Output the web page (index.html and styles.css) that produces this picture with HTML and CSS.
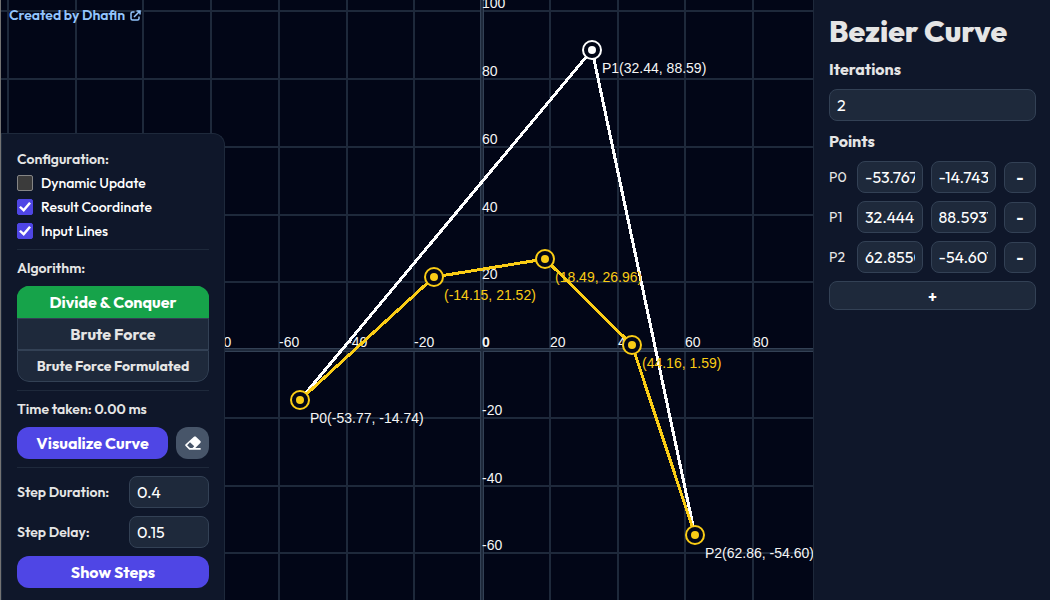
FILE: index.html
```html
<!DOCTYPE html>
<html lang="en">
<head>
<meta charset="utf-8">
<meta name="viewport" content="width=device-width, initial-scale=1">
<title>Bezier Curve</title>
<link rel="stylesheet" href="styles.css">
</head>
<body>
<div class="app">
  <main class="stage">
    <svg class="plot" role="img" aria-label="Bezier curve plot">
      <path class="grid" d="M8 0V2000M76 0V2000M143 0V2000M211 0V2000M279 0V2000M347 0V2000M414 0V2000M550 0V2000M618 0V2000M685 0V2000M753 0V2000M821 0V2000M889 0V2000M0 11H3000M0 79H3000M0 147H3000M0 215H3000M0 282H3000M0 418H3000M0 486H3000M0 553H3000M0 621H3000"/>
      <path class="axis" d="M482 0V2000M0 350H3000"/>
      <path class="axis-core" d="M482 0V2000M0 350H3000"/>
      <g class="ticks">
        <text x="211" y="347">-80</text><text x="279" y="347">-60</text><text x="347" y="347">-40</text><text x="414" y="347">-20</text>
        <text class="origin" x="482" y="347">0</text>
        <text x="550" y="347">20</text><text x="618" y="347">40</text><text x="685" y="347">60</text><text x="753" y="347">80</text>
        <text x="482" y="8">100</text><text x="482" y="76">80</text><text x="482" y="144">60</text><text x="482" y="212">40</text><text x="482" y="279">20</text>
        <text x="482" y="415">-20</text><text x="482" y="483">-40</text><text x="482" y="550">-60</text>
      </g>
      <polyline class="input-line" points="300,400 592,50 695,535"/>
      <polyline class="result-line" points="300,400 434,277 545,259 632,345 695,535"/>
      <g class="input-node"><circle cx="592" cy="50" r="9"/><circle class="dot" cx="592" cy="50" r="4"/></g>
      <g class="result-node">
        <circle cx="300" cy="400" r="9"/><circle class="dot" cx="300" cy="400" r="4"/>
        <circle cx="434" cy="277" r="9"/><circle class="dot" cx="434" cy="277" r="4"/>
        <circle cx="545" cy="259" r="9"/><circle class="dot" cx="545" cy="259" r="4"/>
        <circle cx="632" cy="345" r="9"/><circle class="dot" cx="632" cy="345" r="4"/>
        <circle cx="695" cy="535" r="9"/><circle class="dot" cx="695" cy="535" r="4"/>
      </g>
      <g class="ticks">
        <text x="310" y="423">P0(-53.77, -14.74)</text>
        <text x="602" y="73">P1(32.44, 88.59)</text>
        <text x="705" y="558">P2(62.86, -54.60)</text>
      </g>
      <g class="result-labels">
        <text x="444" y="300">(-14.15, 21.52)</text>
        <text x="555" y="282">(18.49, 26.96)</text>
        <text x="642" y="368">(44.16, 1.59)</text>
      </g>
    </svg>
    <a class="credit" href="#">Created by Dhafin
      <svg class="credit-icon" viewBox="0 0 22 22" aria-hidden="true"><path d="M9 4H5Q2 4 2 7V17Q2 20 5 20H15Q18 20 18 17V13M13 2H20V9M20 2L8 14"/></svg>
    </a>
    <section class="panel">
      <div class="group">
        <h2 class="caption">Configuration:</h2>
        <label class="check"><input type="checkbox"><span>Dynamic Update</span></label>
        <label class="check"><input type="checkbox" checked><span>Result Coordinate</span></label>
        <label class="check"><input type="checkbox" checked><span>Input Lines</span></label>
      </div>
      <div class="group algorithm-group">
        <h2 class="caption">Algorithm:</h2>
        <div class="algorithms">
          <button class="algorithm selected" type="button">Divide &amp; Conquer</button>
          <button class="algorithm" type="button">Brute Force</button>
          <button class="algorithm small" type="button">Brute Force Formulated</button>
        </div>
      </div>
      <div class="group">
        <p class="caption">Time taken: 0.00 ms</p>
        <div class="actions">
          <button class="primary" type="button">Visualize Curve</button>
          <button class="erase" type="button" aria-label="Clear"><svg viewBox="0 0 45 38" aria-hidden="true"><path fill-rule="evenodd" d="M26 1Q28 0 30 1L44 14Q45 17 43 19L29 33H44V38H12L1 27Q0 25 1 23ZM14 17L6 25L14 33H21L26 28Z"/></svg></button>
        </div>
      </div>
      <div class="group steps">
        <div class="field"><label for="duration">Step Duration:</label><input class="box" id="duration" type="text" value="0.4"></div>
        <div class="field"><label for="delay">Step Delay:</label><input class="box" id="delay" type="text" value="0.15"></div>
        <button class="primary" type="button">Show Steps</button>
      </div>
    </section>
  </main>
  <aside class="sidebar">
    <h1 class="title">Bezier Curve</h1>
    <label class="heading" for="iterations">Iterations</label>
    <input class="box" id="iterations" type="text" value="2">
    <h2 class="heading">Points</h2>
    <div class="points">
      <div class="point"><span class="name">P0</span><input class="box" aria-label="P0 x" value="-53.767"><input class="box" aria-label="P0 y" value="-14.743"><button class="tool" type="button" aria-label="Remove P0">-</button></div>
      <div class="point"><span class="name">P1</span><input class="box" aria-label="P1 x" value="32.444"><input class="box" aria-label="P1 y" value="88.5937"><button class="tool" type="button" aria-label="Remove P1">-</button></div>
      <div class="point"><span class="name">P2</span><input class="box" aria-label="P2 x" value="62.8550"><input class="box" aria-label="P2 y" value="-54.607"><button class="tool" type="button" aria-label="Remove P2">-</button></div>
      <button class="tool add" type="button" aria-label="Add point">+</button>
    </div>
  </aside>
</div>
</body>
</html>
```
FILE: styles.css
```css
* { box-sizing: border-box; }
body {
  margin: 0;
  background: #020617;
  color: #e5e5e5;
  font: 600 14px/24px Outfit, Lato, sans-serif;
}
h1, h2, p { margin: 0; font: inherit; }
button, input { font: inherit; color: inherit; margin: 0; }
button { cursor: pointer; }
.app { display: flex; min-height: 100vh; }
.stage {
  position: relative;
  flex: 1;
  min-width: 0;
  display: flex;
  flex-direction: column;
  justify-content: space-between;
  align-items: flex-start;
  overflow: hidden;
  border-left: 1px solid #737373;
}
.plot { position: absolute; top: 0; left: -1px; width: calc(100% + 1px); height: 100%; }
.grid { stroke: #1e293b; stroke-width: 2; }
.axis { stroke: #334155; stroke-width: 4; }
.axis-core { stroke: #1e293b; stroke-width: 2; }
.plot text { font: 14px "Liberation Sans", Arial, sans-serif; }
.ticks { fill: #f5f5f5; }
.plot .origin { font-weight: 700; }
.input-line, .result-line { fill: none; stroke-width: 3; shape-rendering: crispEdges; }
.input-line { stroke: #fff; }
.result-line { stroke: #facc15; }
.input-node circle, .result-node circle { fill: #020617; stroke-width: 2; }
.input-node circle { stroke: #fff; }
.result-node circle { stroke: #facc15; }
.input-node .dot { fill: #fff; stroke: none; }
.result-node .dot { fill: #facc15; stroke: none; }
.result-labels { fill: #facc15; }
.credit {
  position: relative;
  display: flex;
  align-items: center;
  gap: 5px;
  padding: 3px 8px;
  color: #93c5fd;
  text-decoration: none;
}
.credit-icon { width: 11px; height: 11px; fill: none; stroke: currentColor; stroke-width: 3; }
.panel {
  position: relative;
  width: 224px;
  padding: 13px 15px 12px;
  background: #0f172a;
  border: 1px solid #1e293b;
  border-width: 1px 1px 0;
  border-top-right-radius: 12px;
}
.group + .group { margin-top: 8px; padding-top: 6px; border-top: 1px solid #1e293b; }
.group + .algorithm-group { margin-top: 6px; }
.check { display: flex; align-items: center; gap: 8px; color: #fff; font-weight: 500; }
.check input {
  appearance: none;
  width: 16px;
  height: 16px;
  background: #3b3b3b;
  border: 1px solid #858585;
  border-radius: 2px;
}
.check input:checked { display: grid; place-items: center; background: #4f46e5; border-color: #4f46e5; }
.check input:checked::before {
  content: "";
  width: 12px;
  height: 10px;
  background: #fff;
  clip-path: polygon(0 55%, 15% 40%, 38% 65%, 84% 0, 100% 14%, 40% 100%);
}
.algorithms { display: flex; flex-direction: column; margin-top: 6px; border-radius: 12px; overflow: hidden; }
.algorithm { height: 32px; padding: 0; background: #1e293b; border: 1px solid #334155; font-size: 16px; font-weight: 700; }
.algorithm:last-child { border-radius: 0 0 12px 12px; }
.algorithm.small { font-size: 14px; }
.algorithm.selected { background: #16a34a; border-color: #16a34a; color: #fff; }
.actions { display: flex; gap: 8px; margin-top: 6px; }
.primary { flex: 1; height: 32px; border: 0; border-radius: 12px; background: #4f46e5; color: #fff; font-size: 16px; font-weight: 700; }
.erase { display: grid; place-items: center; width: 33px; padding: 0; border: 0; border-radius: 12px; background: #475569; color: #fff; }
.erase svg { width: 16px; height: 14px; fill: currentColor; }
.steps { display: flex; flex-direction: column; gap: 8px; }
.group.steps { padding-top: 8px; }
.steps .primary { flex: none; }
.field { display: flex; align-items: center; justify-content: space-between; }
.field .box { width: 80px; }
.box {
  width: 100%;
  min-width: 0;
  height: 32px;
  padding: 0 7px;
  background: #1e293b;
  border: 1px solid #334155;
  border-radius: 8px;
  color: #fff;
  font-size: 16px;
  font-weight: 400;
}
.sidebar { width: 237px; padding: 13px 14px 12px 15px; background: #0f172a; border-left: 1px solid #1e293b; }
.title { font-size: 30px; line-height: 36px; font-weight: 800; }
.heading { display: block; margin: 8px 0; font-size: 16px; font-weight: 700; }
.points { display: flex; flex-direction: column; gap: 8px; }
.point { display: grid; grid-template-columns: 20px 1fr 1fr 32px; gap: 8px; align-items: center; }
.name { font-weight: 400; }
.tool { height: 31px; padding: 0; background: #1e293b; border: 1px solid #334155; border-radius: 8px; color: #fff; font-size: 16px; font-weight: 700; }
.add { height: 29px; }
```
